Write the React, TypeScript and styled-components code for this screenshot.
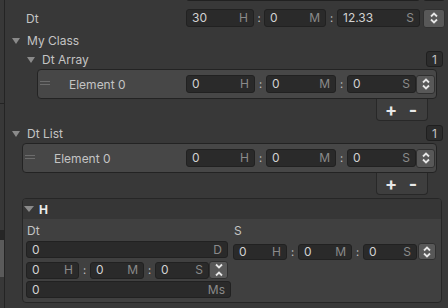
import styled, { createGlobalStyle } from "styled-components";

const GlobalStyle = createGlobalStyle`
  html, body {
    margin: 0;
    padding: 0;
    background: #383838;
    overflow: hidden;
  }
  body {
    font-family: Inter, "Noto Sans", sans-serif;
    font-size: 12px;
    color: #c4c4c4;
  }
  * {
    box-sizing: border-box;
  }
`;

type TimeProps = {
  widths: [number, number, number];
  colons: [number, number];
  values: [string, string, string];
  spinnerW: number;
  spinnerH: number;
  spinnerGap: number;
  fieldH: number;
  collapse?: boolean;
};

const TimeField = ({
  widths,
  colons,
  values,
  spinnerW,
  spinnerH,
  spinnerGap,
  fieldH,
  collapse,
}: TimeProps) => {
  const units = ["H", "M", "S"];
  return (
    <TimeGroup>
      {units.map((u, i) => (
        <TimePart key={u}>
          <Field $w={widths[i]} $h={fieldH}>
            <span>{values[i]}</span>
            <Unit>{u}</Unit>
          </Field>
          {i < 2 && <Colon $w={colons[i]}>:</Colon>}
        </TimePart>
      ))}
      <Spinner $w={spinnerW} $h={spinnerH} $gap={spinnerGap}>
        <svg width="10" height="14" viewBox="0 0 10 14">
          {collapse ? (
            <>
              <polyline points="2,1.5 5,4.5 8,1.5" />
              <polyline points="2,12.5 5,9.5 8,12.5" />
            </>
          ) : (
            <>
              <polyline points="2,5.5 5,2.5 8,5.5" />
              <polyline points="2,8.5 5,11.5 8,8.5" />
            </>
          )}
        </svg>
      </Spinner>
    </TimeGroup>
  );
};

const ElementRow = ({ indent, width, labelW }: { indent: number; width: number; labelW: number }) => (
  <ElementBox $left={indent} $w={width}>
    <ElementLabel $w={labelW}>
      <Handle>
        <i />
        <i />
      </Handle>
      Element 0
    </ElementLabel>
    <TimeField
      widths={[69, 70, 69]}
      colons={[11, 11]}
      values={["0", "0", "0"]}
      spinnerW={19}
      spinnerH={19}
      spinnerGap={0}
      fieldH={18}
    />
  </ElementBox>
);

const PlusMinusBar = () => (
  <PlusMinus>
    <span>+</span>
    <span>-</span>
  </PlusMinus>
);

const App = () => {
  return (
    <>
      <GlobalStyle />
      <Page>
        <Strip>
          <StripTop />
          <StripGap />
          <StripDark />
          <StripThumb />
        </Strip>
        <Content>
          {/* row scrolled mostly out of view */}
          <PropRow $top={0}>
            <PropLabel $w={181} $indent={21} />
            <Field $w={234} $h={18}>
              <span />
            </Field>
            <SmallBox />
          </PropRow>

          <PropRow $top={6}>
            <PropLabel $w={181} $indent={21}>Dt</PropLabel>
            <TimeField
              widths={[68, 62, 83]}
              colons={[10, 11]}
              values={["30", "0", "12.33"]}
              spinnerW={22}
              spinnerH={19}
              spinnerGap={3}
              fieldH={18}
            />
          </PropRow>

          <Foldout $indent={7} $top={2} $h={20}>
            <Arrow />
            My Class
          </Foldout>

          <Foldout $indent={22} $top={0} $h={18}>
            <Arrow />
            Dt Array
            <CountBox>1</CountBox>
          </Foldout>

          <ElementRow indent={32} width={400} labelW={148} />
          <PlusMinusBar />

          <Foldout $indent={7} $top={3} $h={18}>
            <Arrow />
            Dt List
            <CountBox>1</CountBox>
          </Foldout>

          <ElementRow indent={17} width={415} labelW={163} />
          <PlusMinusBar />

          <Panel>
            <PanelHeader>
              <BigArrow />
              <PanelTitle>H</PanelTitle>
            </PanelHeader>
            <PanelBody>
              <SubLabel>Dt</SubLabel>
              <SubLabel>S</SubLabel>

              <Field $w={202} $h={17}>
                <span>0</span>
                <Unit>D</Unit>
              </Field>
              <Shifted>
                <TimeField
                  widths={[54, 54, 54]}
                  colons={[11, 11]}
                  values={["0", "0", "0"]}
                  spinnerW={18}
                  spinnerH={17}
                  spinnerGap={1}
                  fieldH={16}
                />
              </Shifted>

              <TimeField
                widths={[53, 54, 54]}
                colons={[11, 11]}
                values={["0", "0", "0"]}
                spinnerW={19}
                spinnerH={18}
                spinnerGap={0}
                fieldH={17}
                collapse
              />
              <div />

              <Field $w={205} $h={17}>
                <span>0</span>
                <Unit>Ms</Unit>
              </Field>
              <div />
            </PanelBody>
          </Panel>
        </Content>
      </Page>
    </>
  );
};

export default App;

const Page = styled.div`
  width: 448px;
  height: 308px;
  display: flex;
  overflow: hidden;
`;

const Strip = styled.div`
  width: 5px;
  flex: none;
  display: flex;
  flex-direction: column;
  border-right: 1px solid #242424;
`;

const StripTop = styled.div`
  height: 104px;
  border-bottom: 1px solid #242424;
`;

const StripGap = styled.div`
  height: 126px;
`;

const StripDark = styled.div`
  height: 10px;
  background: #262626;
`;

const StripThumb = styled.div`
  height: 37px;
  background: #5a5a5a;
`;

const Content = styled.div`
  flex: 1;
  display: flex;
  flex-direction: column;
  margin-top: -18px;
  padding-right: 3px;
`;

const PropRow = styled.div<{ $top: number }>`
  display: flex;
  align-items: center;
  height: 20px;
  margin-top: ${(p) => p.$top}px;
`;

const PropLabel = styled.div<{ $w: number; $indent: number }>`
  flex: none;
  width: ${(p) => p.$w}px;
  padding-left: ${(p) => p.$indent}px;
  color: #c4c4c4;
`;

const SmallBox = styled.div`
  width: 22px;
  height: 18px;
  margin-left: 3px;
  border-radius: 3px;
  background: #2c2c2c;
  border: 1px solid #212121;
`;

const TimeGroup = styled.div`
  display: flex;
  align-items: center;
`;

const TimePart = styled.div`
  display: flex;
  align-items: center;
`;

const Field = styled.div<{ $w: number; $h: number }>`
  flex: none;
  width: ${(p) => p.$w}px;
  height: ${(p) => p.$h}px;
  display: flex;
  align-items: center;
  justify-content: space-between;
  padding: 0 5px;
  background: #2a2a2a;
  border: 1px solid #212121;
  border-radius: 3px;
  color: #d2d2d2;
  font-size: 12px;
  line-height: 1;
`;

const Unit = styled.span`
  color: #8a8a8a;
`;

const Colon = styled.div<{ $w: number }>`
  width: ${(p) => p.$w}px;
  text-align: center;
  color: #c4c4c4;
  font-size: 11px;
`;

const Spinner = styled.div<{ $w: number; $h: number; $gap: number }>`
  flex: none;
  width: ${(p) => p.$w}px;
  height: ${(p) => p.$h}px;
  margin-left: ${(p) => p.$gap}px;
  display: flex;
  align-items: center;
  justify-content: center;
  background: #585858;
  border: 1px solid #303030;
  border-radius: 3px;
  svg polyline {
    fill: none;
    stroke: #e6e6e6;
    stroke-width: 1.8;
  }
`;

const Foldout = styled.div<{ $indent: number; $top: number; $h: number }>`
  display: flex;
  align-items: center;
  gap: 7px;
  height: ${(p) => p.$h}px;
  margin-top: ${(p) => p.$top}px;
  padding-left: ${(p) => p.$indent}px;
  color: #c4c4c4;
`;

const Arrow = styled.span`
  width: 0;
  height: 0;
  border-left: 4px solid transparent;
  border-right: 4px solid transparent;
  border-top: 6px solid #8a8a8a;
  margin-top: 1px;
`;

const CountBox = styled.div`
  margin-left: auto;
  margin-right: 2px;
  width: 17px;
  height: 16px;
  display: flex;
  align-items: center;
  justify-content: center;
  background: #2c2c2c;
  border: 1px solid #1f1f1f;
  border-radius: 3px;
  color: #c4c4c4;
`;

const ElementBox = styled.div<{ $left: number; $w: number }>`
  width: ${(p) => p.$w}px;
  height: 30px;
  margin-left: ${(p) => p.$left}px;
  margin-top: 1px;
  display: flex;
  align-items: center;
  background: #474747;
  border: 1px solid #232323;
  border-radius: 4px;
`;

const ElementLabel = styled.div<{ $w: number }>`
  flex: none;
  width: ${(p) => p.$w}px;
  display: flex;
  align-items: center;
  gap: 19px;
  padding-left: 2px;
  color: #c4c4c4;
`;

const Handle = styled.span`
  width: 10px;
  display: flex;
  flex-direction: column;
  gap: 2px;
  margin-top: -3px;
  i {
    display: block;
    height: 1px;
    background: #6c6c6c;
  }
`;

const PlusMinus = styled.div`
  align-self: flex-end;
  margin-right: 17px;
  width: 52px;
  height: 22px;
  display: flex;
  align-items: center;
  gap: 10px;
  padding-left: 8px;
  background: #3e3e3e;
  border: 1px solid #282828;
  border-top: none;
  border-radius: 0 0 4px 4px;
  color: #e8e8e8;
  font-size: 18px;
  font-weight: 700;
  span {
    width: 12px;
    text-align: center;
    line-height: 1;
  }
`;

const Panel = styled.div`
  margin: 3px 3px 0 17px;
  border: 1px solid #262626;
  border-radius: 4px;
  background: #404040;
  overflow: hidden;
`;

const PanelHeader = styled.div`
  height: 20px;
  display: flex;
  align-items: center;
  gap: 5px;
  padding-left: 1px;
  background: #363636;
`;

const BigArrow = styled.span`
  width: 0;
  height: 0;
  border-left: 5px solid transparent;
  border-right: 5px solid transparent;
  border-top: 6px solid #8a8a8a;
  margin-top: -1px;
`;

const PanelTitle = styled.span`
  color: #ececec;
  font-weight: 700;
`;

const PanelBody = styled.div`
  display: grid;
  grid-template-columns: 205px auto;
  grid-template-rows: 14px 17px 17px 17px;
  column-gap: 2px;
  row-gap: 3px;
  padding: 5px 0 4px 3px;
  align-items: start;
`;

const SubLabel = styled.div`
  padding-left: 1px;
  line-height: 14px;
  color: #c4c4c4;
`;

const Shifted = styled.div`
  margin-top: 2px;
`;
